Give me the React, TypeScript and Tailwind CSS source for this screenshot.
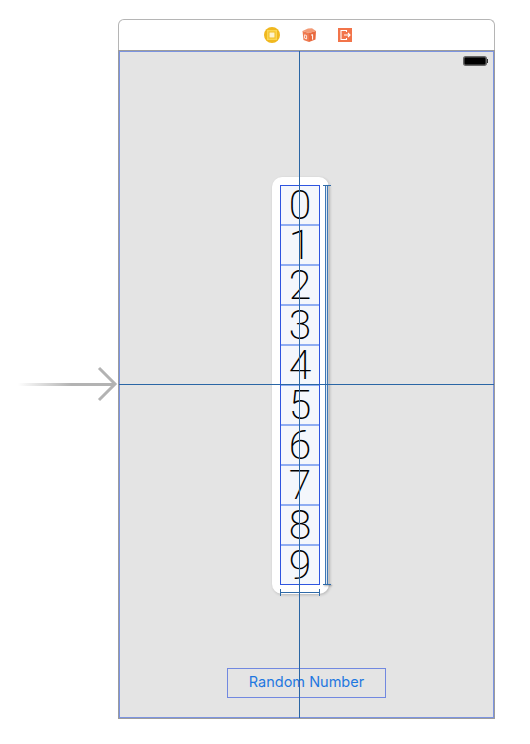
const digits = ['0', '1', '2', '3', '4', '5', '6', '7', '8', '9'];

function CoinIcon() {
  return (
    <svg width="16" height="16" viewBox="0 0 16 16">
      <circle cx="8" cy="8" r="8" fill="#f0b81f" />
      <rect x="3" y="3" width="10" height="10" fill="#fbd651" />
      <rect x="4.5" y="4.5" width="7" height="7" fill="#f2bd22" />
      <rect x="5.5" y="5.5" width="5" height="5" fill="#fdf3cf" />
    </svg>
  );
}

function CubeIcon() {
  return (
    <svg width="14" height="14" viewBox="0 0 14 14">
      <path d="M0.5 3 L6 0.5 L10 0.2 L14 3 L7 5 Z" fill="#f39a75" />
      <path d="M0.5 3 L7 5 L7 14 L1.5 12 Z" fill="#ee7a50" />
      <path d="M7 5 L14 3 L13.5 11.5 L7 14 Z" fill="#e96a3f" />
      <path d="M2.6 6.8 L4.6 7.6 L4.6 11 L2.6 10.2 Z" fill="none" stroke="#fff" strokeWidth="0.8" />
      <path d="M9 7.2 L10.6 6.6 L10.6 11.6" fill="none" stroke="#fff" strokeWidth="1" />
    </svg>
  );
}

function ExitIcon() {
  return (
    <svg width="14" height="14" viewBox="0 0 14 14">
      <rect width="14" height="14" fill="#f2744a" />
      <path d="M8.5 4 V2.5 H3 V11.5 H8.5 V10" fill="none" stroke="#fff" strokeWidth="1.1" />
      <path d="M6 7 H12 M10 5 L12 7 L10 9" fill="none" stroke="#fff" strokeWidth="1.1" />
    </svg>
  );
}

export default function App() {
  return (
    <div className="relative w-[530px] h-[744px] bg-white pl-[118px] pt-[19px] font-['Liberation_Sans',sans-serif]">
      <div className="w-[377px]">
        <div className="flex h-[31px] items-center justify-center rounded-t-[6px] border border-b-0 border-[#b5b5b5] pl-[2px]">
          <div className="flex items-center gap-[22px]">
            <CoinIcon />
            <CubeIcon />
            <ExitIcon />
          </div>
        </div>
        <div className="relative flex h-[669px] flex-col items-center border border-[#9c9c9c] bg-[#e4e4e4] shadow-[inset_0_0_0_1px_#7b93e0]">
          <svg className="absolute right-[6px] top-[5px]" width="25" height="10" viewBox="0 0 25 10">
            <rect x="0.75" y="0.75" width="22.5" height="8.5" rx="2" fill="#000" stroke="#666" strokeWidth="1.5" />
            <rect x="24" y="3" width="1" height="4" fill="#333" />
          </svg>

          <div className="relative mt-[126px] ml-[153px] self-start rounded-[10px] bg-white pb-[9px] pl-[8px] pr-[9px] pt-[8px] shadow-[1px_1px_3px_rgba(0,0,0,0.2)]">
            <div className="w-[40px] border border-[#2f55e0] bg-[#f4f7fc]">
              {digits.map((d, i) => (
                <div
                  key={d}
                  className={
                    i === 9
                      ? "flex h-[38px] items-center justify-center pt-[1px] font-['Roboto',sans-serif] text-[41px] font-extralight leading-[37px] text-black"
                      : "flex h-[40px] items-center justify-center border-b-2 border-[#8fadf2] pt-[1px] font-['Roboto',sans-serif] text-[41px] font-extralight leading-[37px] text-black"
                  }
                >
                  {d}
                </div>
              ))}
            </div>
            {/* height guide to the right of the picker */}
            <div className="absolute left-[53px] top-[8px] h-[400px] w-[3px] border-x border-[#3f78b5] bg-[#dfe8f3] shadow-[1px_0_1px_rgba(0,0,0,0.25)]" />
            <div className="absolute left-[51px] top-[8px] h-[1px] w-[8px] bg-[#2f6aa8]" />
            <div className="absolute left-[51px] top-[407px] h-[1px] w-[8px] bg-[#2f6aa8] shadow-[1px_1px_2px_rgba(0,0,0,0.4)]" />

            {/* width guide over the bottom edge */}
            <div className="absolute left-[8px] top-[412px] flex h-[7px] w-[40px] items-center border-x border-[#2f6aa8]">
              <div className="h-[1px] w-full bg-[#2f6aa8]" />
            </div>
          </div>

          <div className="mt-[74px] flex h-[30px] w-[159px] items-center justify-center border border-[#7188e0] pb-[2px] text-[14.5px] text-[#1f78e0] font-['Inter',sans-serif]">
            Random Number
          </div>
        </div>
      </div>

      {/* alignment guides */}
      <div className="absolute left-[299px] top-[51px] h-[667px] w-[1px] bg-[#2a66a5]" />
      <div className="absolute left-[119px] top-[384px] h-[1px] w-[375px] bg-[#2a66a5]" />

      {/* entry point arrow */}
      <svg className="absolute left-[18px] top-[366px]" width="100" height="36" viewBox="0 0 100 36">
        <defs>
          <linearGradient id="shaft" x1="0" x2="1" y1="0" y2="0">
            <stop offset="0" stopColor="#b3b3b3" stopOpacity="0" />
            <stop offset="0.55" stopColor="#b3b3b3" />
          </linearGradient>
        </defs>
        <rect x="0" y="17" width="97" height="3" fill="url(#shaft)" />
        <path d="M81 2 L97 18 L81 34" fill="none" stroke="#b3b3b3" strokeWidth="3" />
      </svg>
    </div>
  );
}
